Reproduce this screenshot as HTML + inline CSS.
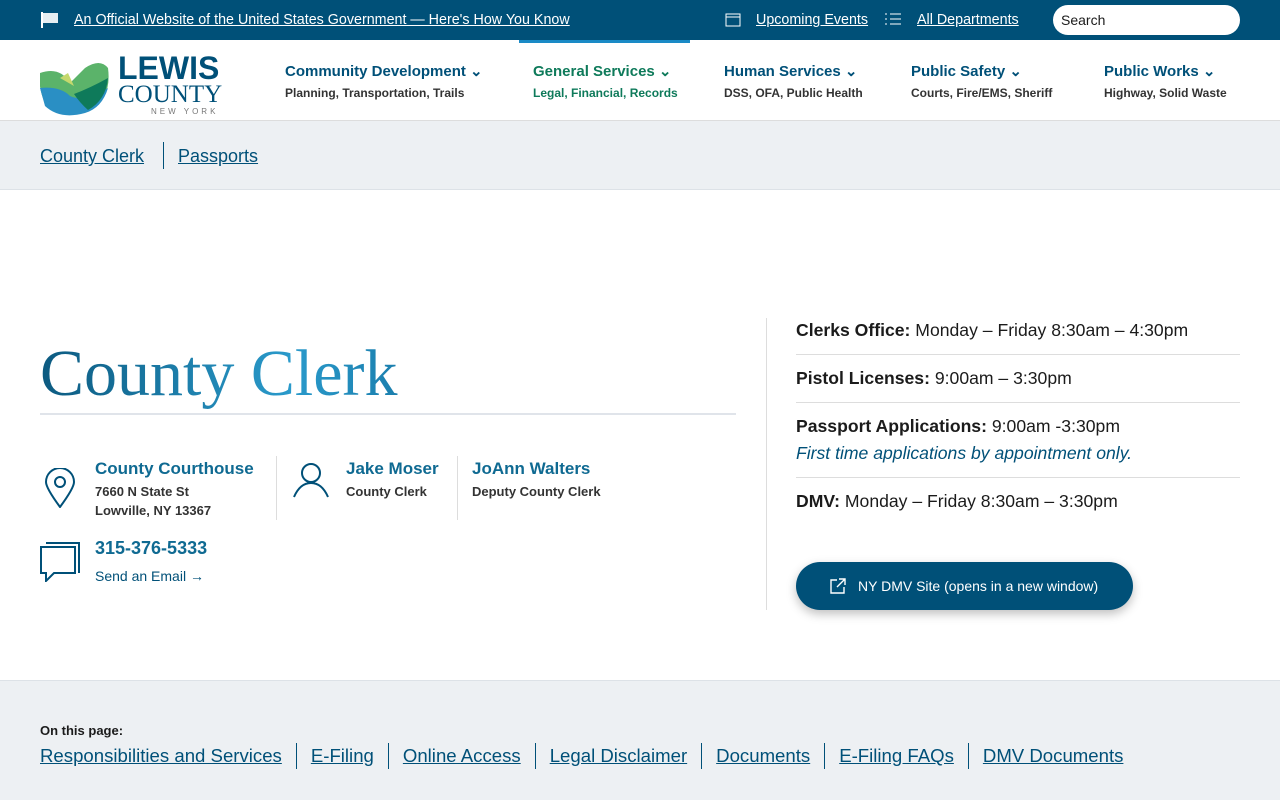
<!DOCTYPE html>
<html><head><meta charset="utf-8"><style>
*{margin:0;padding:0;box-sizing:border-box}
body{width:1280px;height:800px;overflow:hidden;font-family:"Liberation Sans",sans-serif;background:#fff;color:#1b1b1b}
a{color:inherit}
.top{height:40px;background:#005078;color:#fff;position:relative;font-size:14.3px}
.top a{position:absolute;top:12px;text-decoration:underline}
.search{position:absolute;left:1053px;top:5px;width:187px;height:30px;background:#fff;border-radius:15px;color:#1b1b1b;font-size:14px;padding:7px 8px}
.hdr{height:81px;position:relative;border-bottom:1px solid #ddd}
.nav{position:absolute;top:22px}
.nav b{display:block;font-size:15px;color:#005078}
.nav span{display:block;font-size:12px;font-weight:bold;color:#333;margin-top:6px}
.crumb{height:69px;background:#edf0f3;border-bottom:1px solid #dde2e7;position:relative;font-size:18px;color:#005078}
.crumb a{position:absolute;top:25px;text-decoration:underline}
h1{position:absolute;left:40px;top:336px;font-family:"Liberation Serif",serif;font-size:66px;font-weight:normal;color:#0f6a92;background:linear-gradient(90deg,#0c5a80,#2a9acb 70%,#1b7fae);-webkit-background-clip:text;background-clip:text;-webkit-text-fill-color:transparent}
.rule{position:absolute;left:40px;top:413px;width:696px;height:2px;background:#e0e4ea}
.abs{position:absolute}
.bl{font-weight:bold;font-size:17px;color:#0f6a92}
.sm{font-size:13px;font-weight:bold;color:#333;line-height:19px}
.vl{position:absolute;width:1px;background:#ddd}
.hr{position:absolute;left:796px;width:444px;height:1px;background:#ddd}
.r{position:absolute;left:796px;font-size:17.6px;color:#1b1b1b}
.btn{position:absolute;left:796px;top:562px;width:337px;height:48px;border-radius:24px;background:#005078;color:#fff;font-size:14px;box-shadow:0 4px 10px rgba(0,0,0,.25)}
.foot{position:absolute;top:680px;left:0;width:1280px;height:120px;background:#edf0f3;border-top:1px solid #dde2e7}
.foot .links{position:absolute;left:40px;top:62px;font-size:18.6px;color:#005078;display:flex}
.foot .links a{padding:0 14px;border-left:1px solid #005078;line-height:26px}
.foot .links a:first-child{padding-left:0;border:none}
</style></head><body>
<div class="top">
<svg class="abs" style="left:40px;top:11px" width="20" height="18" viewBox="0 0 20 18"><path d="M2 1v16" stroke="#fff" stroke-width="2"/><path d="M3 2h15v10H3z" fill="#fff" opacity=".9"/></svg>
<a style="left:74px">An Official Website of the United States Government — Here's How You Know</a>
<svg class="abs" style="left:725px;top:12px" width="16" height="15"><rect x="1" y="2" width="14" height="12" fill="none" stroke="#fff"/><path d="M1 5h14" stroke="#fff"/></svg>
<a style="left:756px">Upcoming Events</a>
<svg class="abs" style="left:885px;top:13px" width="16" height="13"><path d="M0 1h2M5 1h11M0 6h2M5 6h11M0 11h2M5 11h11" stroke="#fff"/></svg>
<a style="left:917px">All Departments</a>
<div class="search">Search</div>
</div>
<div class="hdr">
<div class="abs" style="left:519px;top:0;width:171px;height:3px;background:#1a8ac6"></div>
<svg class="abs" style="left:40px;top:18px" width="70" height="58" viewBox="0 0 70 58"><path d="M0 15 Q20 8 30 25 L45 10 Q60 0 68 10 Q72 40 50 52 Q25 62 5 45 Q-2 30 0 15z" fill="#5bb36a"/><path d="M0 30 Q20 28 30 38 Q45 45 68 30 Q62 50 45 55 Q20 62 5 48z" fill="#2a8fc4"/><path d="M20 20 L28 15 L34 28 Z" fill="#c5d86d"/><path d="M34 36 Q50 30 68 20 Q66 42 48 52 Q40 45 34 36z" fill="#0e7a5a"/></svg>
<div class="abs" style="left:118px;top:11px;font-size:32px;font-weight:bold;color:#005078;line-height:34px">LEWIS</div>
<div class="abs" style="left:118px;top:42px;font-family:'Liberation Serif',serif;font-size:25px;line-height:26px;color:#005078">COUNTY</div>
<div class="abs" style="left:151px;top:67px;font-size:8px;letter-spacing:3px;color:#777">NEW YORK</div>
<div class="nav" style="left:285px"><b>Community Development ⌄</b><span>Planning, Transportation, Trails</span></div>
<div class="nav" style="left:533px"><b style="color:#0e7a5a">General Services ⌄</b><span style="color:#0e7a5a">Legal, Financial, Records</span></div>
<div class="nav" style="left:724px"><b>Human Services ⌄</b><span>DSS, OFA, Public Health</span></div>
<div class="nav" style="left:911px"><b>Public Safety ⌄</b><span>Courts, Fire/EMS, Sheriff</span></div>
<div class="nav" style="left:1104px"><b>Public Works ⌄</b><span>Highway, Solid Waste</span></div>
</div>
<div class="crumb"><a style="left:40px">County Clerk</a><div class="abs" style="left:163px;top:21px;width:1px;height:27px;background:#005078"></div><a style="left:178px">Passports</a></div>
<h1>County Clerk</h1>
<div class="rule"></div>
<svg class="abs" style="left:45px;top:468px" width="30" height="40" viewBox="0 0 30 40"><path d="M15 39 Q1 20 1 14 A14 14 0 0 1 29 14 Q29 20 15 39z" fill="none" stroke="#005078" stroke-width="2"/><circle cx="15" cy="14" r="5" fill="none" stroke="#005078" stroke-width="2"/></svg>
<div class="abs bl" style="left:95px;top:459px">County Courthouse</div>
<div class="abs sm" style="left:95px;top:482px">7660 N State St<br>Lowville, NY 13367</div>
<div class="vl" style="left:276px;top:456px;height:64px"></div>
<svg class="abs" style="left:292px;top:462px" width="38" height="36" viewBox="0 0 38 36"><circle cx="19" cy="11" r="9" fill="none" stroke="#005078" stroke-width="2"/><path d="M2 35 Q8 21 19 21 Q30 21 36 35" fill="none" stroke="#005078" stroke-width="2"/></svg>
<div class="abs bl" style="left:346px;top:459px">Jake Moser</div>
<div class="abs sm" style="left:346px;top:482px">County Clerk</div>
<div class="vl" style="left:457px;top:456px;height:64px"></div>
<div class="abs bl" style="left:472px;top:459px">JoAnn Walters</div>
<div class="abs sm" style="left:472px;top:482px">Deputy County Clerk</div>
<svg class="abs" style="left:40px;top:542px" width="40" height="40" viewBox="0 0 40 40"><path d="M6 1h33v30" fill="none" stroke="#005078" stroke-width="2"/><path d="M1 5h34v26H14l-8 8v-8H1z" fill="none" stroke="#005078" stroke-width="2"/></svg>
<div class="abs bl" style="left:95px;top:538px;font-size:18px">315-376-5333</div>
<div class="abs" style="left:95px;top:568px;font-size:14px;color:#005078">Send an Email →</div>
<div class="vl" style="left:766px;top:318px;height:292px"></div>
<div class="r" style="top:320px"><b>Clerks Office:</b> Monday – Friday 8:30am – 4:30pm</div>
<div class="hr" style="top:354px"></div>
<div class="r" style="top:368px"><b>Pistol Licenses:</b> 9:00am – 3:30pm</div>
<div class="hr" style="top:402px"></div>
<div class="r" style="top:416px"><b>Passport Applications:</b> 9:00am -3:30pm</div>
<div class="r" style="top:443px;font-style:italic;color:#005078">First time applications by appointment only.</div>
<div class="hr" style="top:477px"></div>
<div class="r" style="top:491px"><b>DMV:</b> Monday – Friday 8:30am – 3:30pm</div>
<div class="btn"><svg class="abs" style="left:34px;top:16px" width="16" height="16"><path d="M7 2H1v13h13V9M9 1h6v6M15 1L7 9" fill="none" stroke="#fff" stroke-width="1.4"/></svg><span class="abs" style="left:62px;top:16px">NY DMV Site (opens in a new window)</span></div>
<div class="foot">
<div class="abs" style="left:40px;top:42px;font-size:13px;font-weight:bold">On this page:</div>
<div class="links"><a style="text-decoration:underline">Responsibilities and Services</a><a><u>E-Filing</u></a><a><u>Online Access</u></a><a><u>Legal Disclaimer</u></a><a><u>Documents</u></a><a><u>E-Filing FAQs</u></a><a><u>DMV Documents</u></a></div>
</div>
</body></html>
